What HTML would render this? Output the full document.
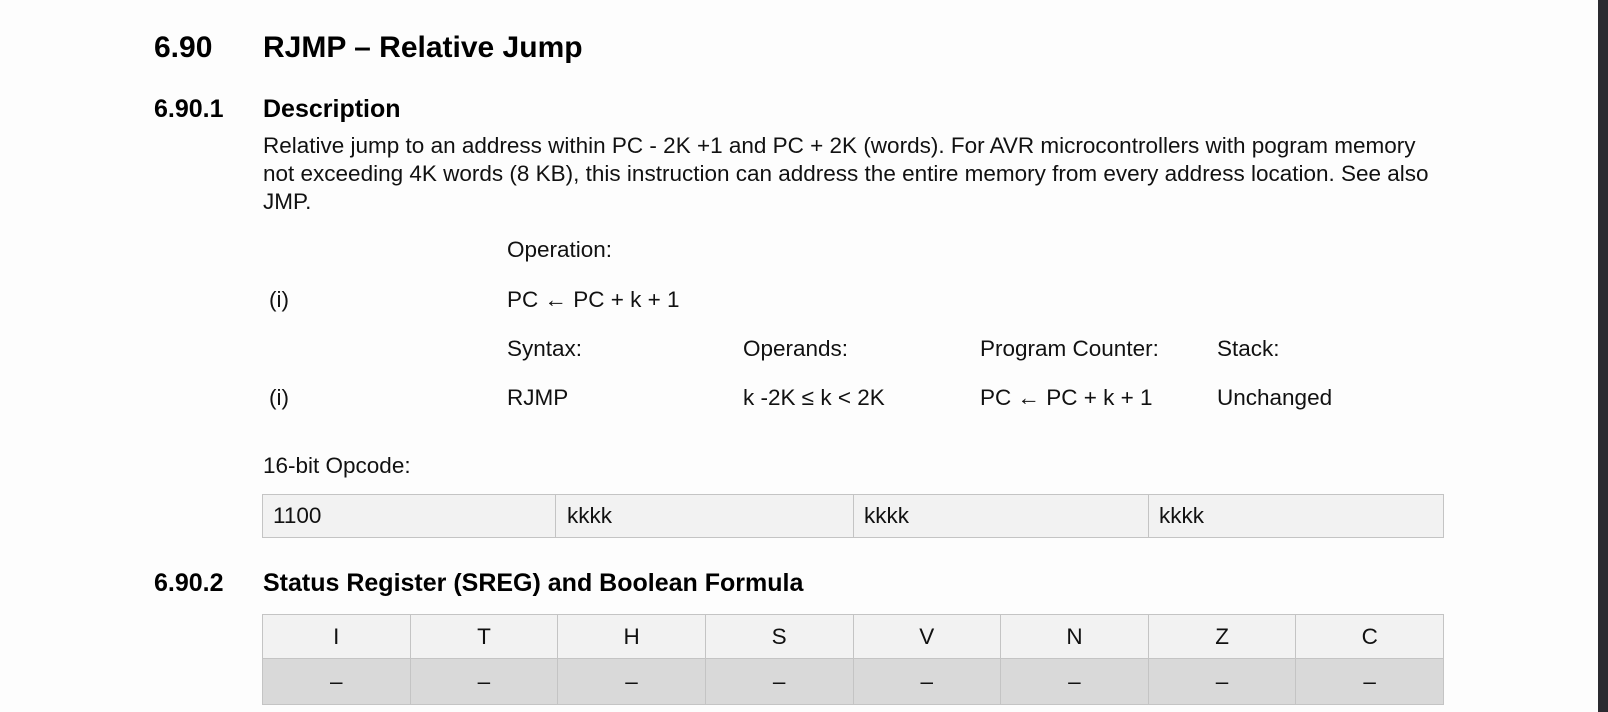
<!DOCTYPE html>
<html><head><meta charset="utf-8"><style>
body{margin:0;width:1608px;height:712px;background:#fdfdfd;font-family:"Liberation Sans",Arial,sans-serif;color:#111;position:relative;overflow:hidden}
.a{position:absolute;white-space:nowrap;line-height:1}
.b{font-weight:bold;color:#000}
.t{font-size:22.5px}
.strip{position:absolute;left:1598px;top:0;width:10px;height:712px;background:#2b2a30}
table{position:absolute;border-collapse:collapse;font-size:22.5px;table-layout:fixed}
td{border:1.5px solid #c4c4c4;padding:0}
</style></head><body>
<div class="a b" style="left:154px;top:33px;font-size:30px">6.90</div>
<div class="a b" style="left:263px;top:33px;font-size:30px">RJMP – Relative Jump</div>
<div class="a b" style="left:154px;top:97px;font-size:25px">6.90.1</div>
<div class="a b" style="left:263px;top:97px;font-size:25px">Description</div>
<div class="a t" style="left:263px;top:132px;line-height:28px;white-space:nowrap">Relative jump to an address within PC - 2K +1 and PC + 2K (words). For AVR microcontrollers with pogram memory<br>not exceeding 4K words (8 KB), this instruction can address the entire memory from every address location. See also<br>JMP.</div>
<div class="a t" style="left:507px;top:239px">Operation:</div>
<div class="a t" style="left:269px;top:289px">(i)</div>
<div class="a t" style="left:507px;top:289px">PC ← PC + k + 1</div>
<div class="a t" style="left:507px;top:338px">Syntax:</div>
<div class="a t" style="left:743px;top:338px">Operands:</div>
<div class="a t" style="left:980px;top:338px">Program Counter:</div>
<div class="a t" style="left:1217px;top:338px">Stack:</div>
<div class="a t" style="left:269px;top:387px">(i)</div>
<div class="a t" style="left:507px;top:387px">RJMP</div>
<div class="a t" style="left:743px;top:387px">k -2K ≤ k &lt; 2K</div>
<div class="a t" style="left:980px;top:387px">PC ← PC + k + 1</div>
<div class="a t" style="left:1217px;top:387px">Unchanged</div>
<div class="a t" style="left:263px;top:455px">16-bit Opcode:</div>
<table style="left:262px;top:494px;width:1182px;height:44px;background:#f2f2f2">
<tr><td style="width:282px;padding-left:10px">1100</td><td style="width:286px;padding-left:11px">kkkk</td><td style="width:284px;padding-left:10px">kkkk</td><td style="padding-left:10px">kkkk</td></tr></table>
<div class="a b" style="left:154px;top:571px;font-size:25px">6.90.2</div>
<div class="a b" style="left:263px;top:571px;font-size:25px">Status Register (SREG) and Boolean Formula</div>
<table style="left:262px;top:614px;width:1182px;height:90px;text-align:center">
<tr style="background:#f2f2f2;height:44px"><td>I</td><td>T</td><td>H</td><td>S</td><td>V</td><td>N</td><td>Z</td><td>C</td></tr>
<tr style="background:#d9d9d9;height:46px"><td>–</td><td>–</td><td>–</td><td>–</td><td>–</td><td>–</td><td>–</td><td>–</td></tr></table>
<div class="strip"></div>
</body></html>
